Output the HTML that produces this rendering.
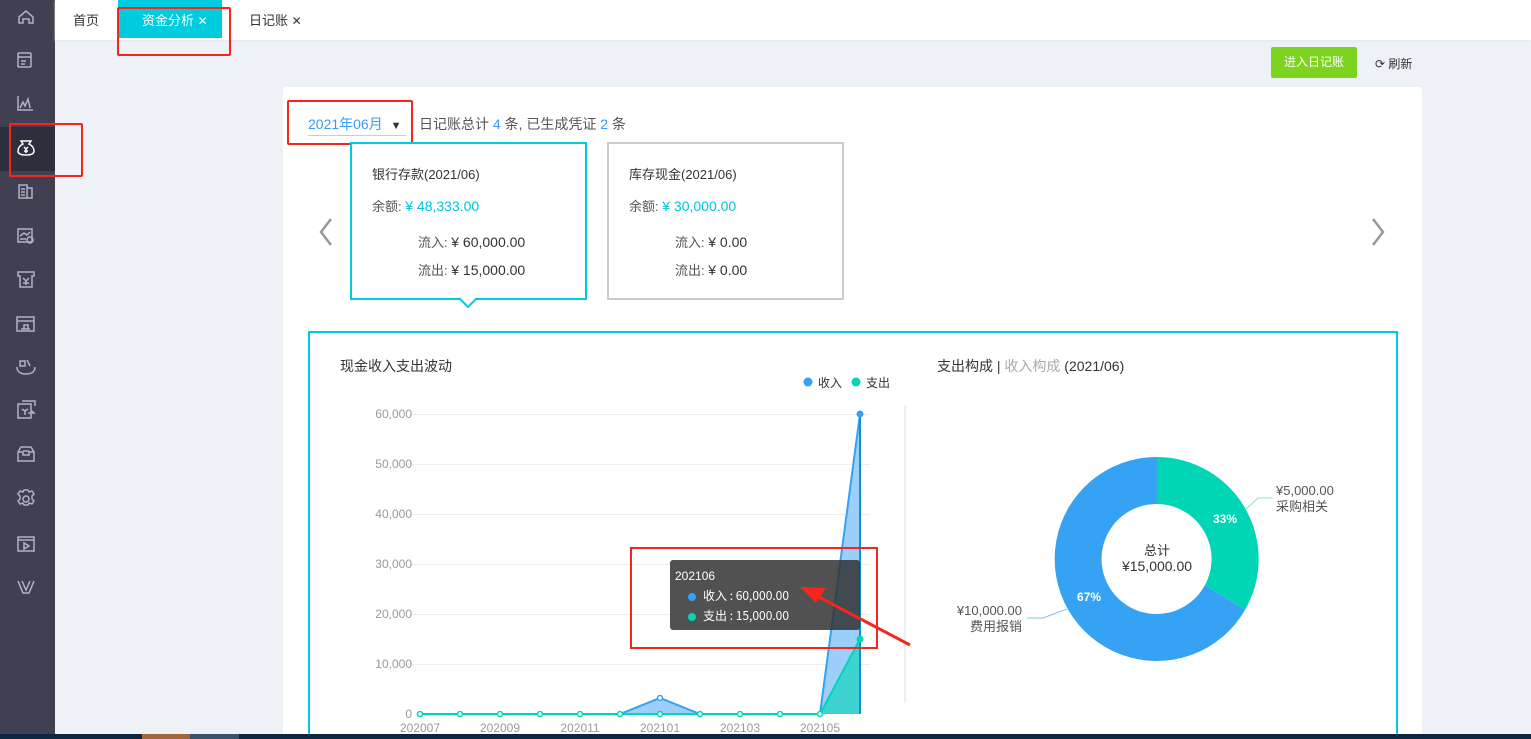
<!DOCTYPE html>
<html style="width:1531px;height:739px;overflow:hidden"><head><meta charset="utf-8"><style>
*{margin:0;padding:0;box-sizing:border-box}
body{width:1531px;height:739px;overflow:hidden;background:#eef2f6;font-family:"Liberation Sans","Noto Sans CJK SC",sans-serif;position:relative;color:#333}
.abs{position:absolute}
#side{left:0;top:0;width:55px;height:739px;background:#404052}
#top{left:55px;top:0;width:1476px;height:40px;background:#fff;box-shadow:0 1px 2px #e3e6ea}
.t{font-size:13px}
.card{position:absolute;background:#fff;font-size:13px}
.red{position:absolute;border:2px solid #f5261e;border-radius:2px}
</style></head><body>
<div id="side" class="abs"></div>
<div class="abs" style="left:0;top:127px;width:55px;height:44px;background:#2e2f3c"></div>
<svg class="abs" style="left:0;top:0" width="55" height="739" fill="none" stroke="#aeb4c4" stroke-width="1.5">
<path d="M19 17l7-6 7 6v6h-4v-4h-6v4h-4z"/>
<rect x="18" y="53" width="13" height="14" rx="1"/><path d="M18 57h13M21 61h5M21 64h4"/>
<path d="M18 96v14h15M20 108l3-6 2 4 3-7 2 9"/>
<path d="M21 141h10l-2 3c4 2 5 5 5 7 0 3-3 4-8 4s-8-1-8-4c0-2 1-5 5-7z" stroke="#fff"/><path d="M24 147l2 2 2-2M26 149v4M24 151h4" stroke="#fff"/>
<rect x="19" y="185" width="8" height="13"/><path d="M27 188h5v10h-5M21 189h4M21 192h4M21 195h4"/>
<rect x="18" y="229" width="14" height="13"/><path d="M20 236l4-3 3 2 3-3M20 239h6"/><circle cx="30" cy="240" r="3"/>
<path d="M18 272h16v4h-2v11h-12v-11h-2zM23 278l3 3 3-3M26 281v4M23 283h6"/>
<rect x="17" y="317" width="17" height="14"/><path d="M17 321h17M21 329h9M24 329v-4h4v4"/>
<path d="M17 367c0 5 4 7 9 7s9-2 9-7M20 361h5v5h-5zM27 360l3 6"/>
<path d="M18 404h13v14h-13zM22 401h13v5M22 409l3 2 3-2M25 411v4M28 413h6l-2-2"/>
<path d="M18 452l3-5h10l3 5v9h-16zM18 452h5v3h6v-3h5M23 451h6"/>
<circle cx="26" cy="499" r="3"/><path d="M24 490h4l1 2 3-1 2 3-2 2 0 3 2 2-2 3-3-1-1 2h-4l-1-2-3 1-2-3 2-2v-3l-2-2 2-3 3 1z"/>
<rect x="18" y="537" width="16" height="14"/><path d="M18 540h16M24 543v6l5-3z"/>
<path d="M18 581l5 12h6l5-12M22 581l4 9 4-9"/>
</svg>
<div id="top" class="abs"></div>
<div class="abs t" style="left:73px;top:10px;color:#333">首页</div>
<div class="abs" style="left:118px;top:0;width:104px;height:38px;background:#00cce0"></div>
<div class="abs t" style="left:142px;top:10px;color:#fff">资金分析 <span style="font-size:12px">✕</span></div>
<div class="abs t" style="left:249px;top:10px;color:#333">日记账 <span style="font-size:12px">✕</span></div>
<div class="red" style="left:117px;top:7px;width:114px;height:49px"></div>
<div class="red" style="left:9px;top:123px;width:74px;height:54px"></div>

<div class="abs" style="left:1271px;top:47px;width:86px;height:31px;background:#7ed321;border-radius:2px;color:#fff;font-size:12px;text-align:center;line-height:31px">进入日记账</div>
<div class="abs" style="left:1375px;top:55px;font-size:12px;color:#333">⟳ 刷新</div>

<div class="abs" style="left:283px;top:87px;width:1139px;height:652px;background:#fff;border-radius:3px 3px 0 0"></div>
<div class="abs" style="left:308px;top:114px;font-size:14px;color:#3a9bf0;border-bottom:1px solid #ccc;width:98px;padding-bottom:1px">2021年06月 <span style="color:#333;font-size:11px;margin-left:4px">▼</span></div>
<div class="abs" style="left:419px;top:114px;font-size:14px;color:#555">日记账总计 <span style="color:#3a9bf0">4</span> 条, 已生成凭证 <span style="color:#3a9bf0">2</span> 条</div>
<div class="red" style="left:287px;top:100px;width:126px;height:45px"></div>

<svg class="abs" style="left:310px;top:210px" width="30" height="50"><path d="M21 9l-10 13 10 13" stroke="#999" stroke-width="2.5" fill="none"/></svg>
<svg class="abs" style="left:1365px;top:210px" width="30" height="50"><path d="M8 9l10 13-10 13" stroke="#999" stroke-width="2.5" fill="none"/></svg>

<div class="card" style="left:350px;top:142px;width:237px;height:158px;border:2px solid #00cce0">
<div class="abs" style="left:20px;top:20px;color:#333">银行存款(2021/06)</div>
<div class="abs" style="left:20px;top:52px;color:#555">余额: <span style="color:#00c4dc;font-size:14px">¥ 48,333.00</span></div>
<div class="abs" style="left:66px;top:88px;color:#555">流入: <span style="color:#333;font-size:14px">¥ 60,000.00</span></div>
<div class="abs" style="left:66px;top:116px;color:#555">流出: <span style="color:#333;font-size:14px">¥ 15,000.00</span></div>
</div>
<svg class="abs" style="left:458px;top:297px" width="20" height="12"><path d="M1 1l9 9 9-9" fill="#fff" stroke="#00cce0" stroke-width="2"/></svg>
<div class="card" style="left:607px;top:142px;width:237px;height:158px;border:2px solid #ccc">
<div class="abs" style="left:20px;top:20px;color:#333">库存现金(2021/06)</div>
<div class="abs" style="left:20px;top:52px;color:#555">余额: <span style="color:#00c4dc;font-size:14px">¥ 30,000.00</span></div>
<div class="abs" style="left:66px;top:88px;color:#555">流入: <span style="color:#333;font-size:14px">¥ 0.00</span></div>
<div class="abs" style="left:66px;top:116px;color:#555">流出: <span style="color:#333;font-size:14px">¥ 0.00</span></div>
</div>

<div class="abs" style="left:308px;top:331px;width:1090px;height:408px;border:2px solid #00cce0;border-bottom:none;background:#fff"></div>
<div class="abs" style="left:340px;top:356px;font-size:14px;color:#333">现金收入支出波动</div>
<div class="abs" style="left:937px;top:356px;font-size:14px;color:#333">支出构成 | <span style="color:#aaa">收入构成</span> (2021/06)</div>

<svg class="abs" style="left:0;top:0" width="1531" height="739" font-family="Liberation Sans, sans-serif">
<circle cx="808" cy="382" r="4.5" fill="#35a2f4"/><text x="818" y="387" font-size="12" fill="#333" font-family="Noto Sans CJK SC">收入</text>
<circle cx="856" cy="382" r="4.5" fill="#00d6b5"/><text x="866" y="387" font-size="12" fill="#333" font-family="Noto Sans CJK SC">支出</text>
<g stroke="#eee"><path d="M410 414.5H870M410 464.5H870M410 514.5H870M410 564.5H870M410 614.5H870M410 664.5H870"/></g>
<g font-size="12" fill="#999" text-anchor="end"><text x="412" y="418">60,000</text><text x="412" y="468">50,000</text><text x="412" y="518">40,000</text><text x="412" y="568">30,000</text><text x="412" y="618">20,000</text><text x="412" y="668">10,000</text><text x="412" y="718">0</text></g>
<g font-size="12" fill="#999" text-anchor="middle"><text x="420" y="732">202007</text><text x="500" y="732">202009</text><text x="580" y="732">202011</text><text x="660" y="732">202101</text><text x="740" y="732">202103</text><text x="820" y="732">202105</text></g>
<path d="M620 714L660 698L700 714Z" fill="#9cd0fa"/>
<path d="M820 714L860 414V714Z" fill="#9cd0fa"/>
<path d="M820 714L860 639V714Z" fill="#3dd3d3"/>
<path d="M420 714H620L660 698L700 714H820L860 414" stroke="#35a2f4" stroke-width="2" fill="none"/>
<path d="M860 414V714" stroke="#1490c8" stroke-width="2"/>
<path d="M420 714H820L860 639" stroke="#00d6b5" stroke-width="2" fill="none"/>
<g fill="#fff" stroke="#00d6b5" stroke-width="1.5"><circle cx="420" cy="714" r="2.5"/><circle cx="460" cy="714" r="2.5"/><circle cx="500" cy="714" r="2.5"/><circle cx="540" cy="714" r="2.5"/><circle cx="580" cy="714" r="2.5"/><circle cx="620" cy="714" r="2.5"/><circle cx="660" cy="714" r="2.5"/><circle cx="700" cy="714" r="2.5"/><circle cx="740" cy="714" r="2.5"/><circle cx="780" cy="714" r="2.5"/><circle cx="820" cy="714" r="2.5"/></g>
<circle cx="660" cy="698" r="2.5" fill="#fff" stroke="#35a2f4" stroke-width="1.5"/>
<circle cx="860" cy="414" r="3.5" fill="#35a2f4"/><circle cx="860" cy="639" r="3.5" fill="#00d6b5"/>
<path d="M905 405V703" stroke="#eee" stroke-width="2"/>
<rect x="670" y="560" width="190" height="70" rx="3" fill="#333" fill-opacity=".85"/>
<text x="675" y="580" font-size="12" fill="#fff">202106</text>
<circle cx="692" cy="597" r="4" fill="#35a2f4"/><text x="703" y="600" font-size="12" fill="#fff" font-family="Noto Sans CJK SC">收入 : 60,000.00</text>
<circle cx="692" cy="617" r="4" fill="#00d6b5"/><text x="703" y="620" font-size="12" fill="#fff" font-family="Noto Sans CJK SC">支出 : 15,000.00</text>
<rect x="631" y="548" width="246" height="100" fill="none" stroke="#f5261e" stroke-width="2"/>
<path d="M910 645L815 595" stroke="#f5261e" stroke-width="3"/><path d="M800 587L826 588L816 603Z" fill="#f5261e"/>
<path d="M1157 457A102 102 0 0 1 1245 610L1205 585A55 55 0 0 0 1157 504Z" fill="#00d6b5"/>
<path d="M1245 610A102 102 0 1 1 1157 457V504A55 55 0 1 0 1205 585Z" fill="#35a2f4"/>
<text x="1157" y="555" font-size="13" fill="#333" text-anchor="middle" font-family="Noto Sans CJK SC">总计</text>
<text x="1157" y="571" font-size="14" fill="#333" text-anchor="middle">¥15,000.00</text>
<text x="1225" y="523" font-size="12" fill="#fff" text-anchor="middle" font-weight="bold">33%</text>
<text x="1089" y="601" font-size="12" fill="#fff" text-anchor="middle" font-weight="bold">67%</text>
<path d="M1246 509L1258 498H1272" stroke="#7ee6d4" fill="none"/>
<path d="M1067 609L1043 618H1027" stroke="#7ec4f6" fill="none"/>
<text x="1276" y="495" font-size="13" fill="#555">¥5,000.00</text><text x="1276" y="511" font-size="13" fill="#555" font-family="Noto Sans CJK SC">采购相关</text>
<text x="1022" y="615" font-size="13" fill="#555" text-anchor="end">¥10,000.00</text><text x="1022" y="631" font-size="13" fill="#555" text-anchor="end" font-family="Noto Sans CJK SC">费用报销</text>
</svg>
<div class="abs" style="left:0;top:734px;width:1531px;height:5px;background:#0c2640"></div>
<div class="abs" style="left:142px;top:734px;width:48px;height:5px;background:#a0673a"></div>
<div class="abs" style="left:190px;top:734px;width:49px;height:5px;background:#3a5268"></div>
</body></html>
